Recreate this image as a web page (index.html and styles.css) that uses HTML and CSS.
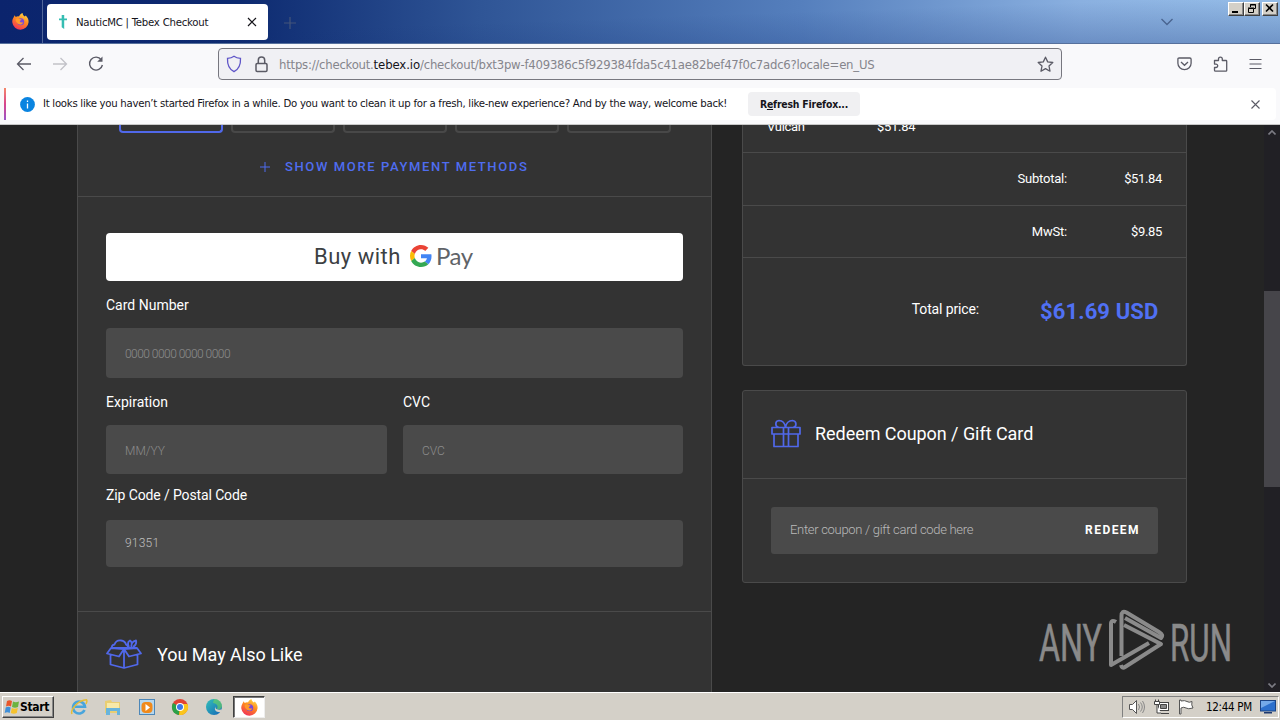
FILE: index.html
```html
<!DOCTYPE html>
<html lang="en">
<head>
<meta charset="utf-8">
<title>NauticMC | Tebex Checkout</title>
<link rel="stylesheet" href="styles.css">
</head>
<body>
<svg width="0" height="0" class="defs" aria-hidden="true">
  <defs>
    <linearGradient id="fire" x1=".8" y1="0" x2=".3" y2="1"><stop offset="0" stop-color="#ffe04a"/><stop offset=".45" stop-color="#ff8a1f"/><stop offset="1" stop-color="#f0305a"/></linearGradient>
    <linearGradient id="edge" x1="0" y1="0" x2="1" y2="1"><stop offset="0" stop-color="#35c1b8"/><stop offset="1" stop-color="#1264b8"/></linearGradient>
    <symbol id="firefox" viewBox="0 0 16 16">
      <path fill="url(#fire)" d="M1.200 4.600 2.500 2l1 1.700C4.600 3 5.800 3 6.600 3.200 7.300 1.600 8.500.6 10 0c-.1 1.500.8 2.300 2 3.200l1-.9c2 2 2.800 4.200 2.600 6.500A7.700 7.700 0 0 1 .3 9c-.2-1.600.1-3 .9-4.400z"/>
      <circle cx="8.200" cy="8.200" r="3.300" fill="#7a48d8"/>
      <path fill="#ff9a2a" d="M3.500 5.500c1.300-1 3-.7 4 .2l1.600.3c-.5 1-1.700.9-1.800 1.800.3 1.300 1.900 1.500 3.200.8-.4 2.200-3.200 3-5 1.500-1.500-1.200-2.300-2.800-2-4.600z"/>
    </symbol>
  </defs>
</svg>
<div class="screen">
  <header class="titlebar">
    <div class="view-btn"><svg width="17" height="17"><use href="#firefox"/></svg></div>
    <div class="tab">
      <svg width="8" height="14" viewBox="0 0 8 14" fill="#35bdb2"><path d="M2.700 0h2.500v3.500H8v1.800H5.200V14l-2.500-1.800V5.300H0V3.500h2.700z"/></svg>
      <span class="tab-title">NauticMC | Tebex Checkout</span>
      <svg width="10" height="10" viewBox="0 0 10 10" stroke="#15141a" stroke-width="1.200"><path d="M1 1l8 8M9 1L1 9"/></svg>
    </div>
    <svg class="newtab" width="12" height="12" viewBox="0 0 12 12" stroke="#44557a" stroke-width="1.200"><path d="M6 0v12M0 6h12"/></svg>
    <svg class="alltabs" width="14" height="8" viewBox="0 0 14 8" fill="none" stroke="#4a6590" stroke-width="1.400"><path d="M1.500 1L7 6.500 12.500 1"/></svg>
    <div class="winbtns">
      <span class="wb"><svg width="13" height="11"><path d="M3 8h6v2H3z"/></svg></span>
      <span class="wb"><svg width="13" height="11" fill="none" stroke="#000"><path d="M5.500 4V1.500h5v4H9M5 2h6M3.500 5.500h5v4h-5zM3 5h6"/></svg></span>
      <span class="wb last"><svg width="13" height="11" stroke="#000" stroke-width="1.600"><path d="M3 1.500l7 7M10 1.500l-7 7"/></svg></span>
    </div>
  </header>

  <div class="toolbar">
    <svg class="back" width="16" height="14" viewBox="0 0 16 14" fill="none" stroke="#5b5b66" stroke-width="1.300"><path d="M15 7H1.500M7.500 1l-6 6 6 6"/></svg>
    <svg class="fwd" width="16" height="14" viewBox="0 0 16 14" fill="none" stroke="#c2c2c8" stroke-width="1.300"><path d="M1 7h13.500M8.500 1l6 6-6 6"/></svg>
    <svg class="reload" width="16" height="16" viewBox="0 0 16 16" fill="none" stroke="#5b5b66" stroke-width="1.400"><path d="M13.300 3.800A6.500 6.500 0 1 0 14.400 9"/><path d="M14.500.5v5.300H9.200z" fill="#5b5b66" stroke="none"/></svg>
    <div class="urlbar">
      <svg width="16" height="18" viewBox="0 0 16 18" fill="none" stroke="#5f55c8" stroke-width="1.300"><path d="M8 1.200c2 1.500 4 2 6.500 2.200C14.800 9.500 13.300 14 8 16.700 2.700 14 1.200 9.500 1.500 3.400 4 3.200 6 2.700 8 1.200z"/></svg>
      <svg class="lock" width="13" height="17" viewBox="0 0 13 17" fill="none" stroke="#5b5b66" stroke-width="1.500"><rect x="1" y="7.500" width="11" height="8" rx="1.200"/><path d="M3.300 7.500V4.200a3.200 3.200 0 0 1 6.400 0V7.500"/></svg>
      <span class="url">https://checkout.<b>tebex.io</b>/checkout/bxt3pw-f409386c5f929384fda5c41ae82bef47f0c7adc6?locale=en_US</span>
      <svg class="star" width="17" height="17" viewBox="0 0 17 17" fill="none" stroke="#5b5b66" stroke-width="1.300" stroke-linejoin="round"><path d="M8.500 1.200l2.200 4.700 5.100.6-3.800 3.500 1 5.200-4.500-2.600L4 15.200 5 10 1.200 6.500l5.100-.6z"/></svg>
    </div>
    <div class="tools">
      <svg width="15" height="14" viewBox="0 0 15 14" fill="none" stroke="#5b5b66" stroke-width="1.300"><path d="M2.200 1h10.600q1.300 0 1.300 1.300v4A6.600 6.300 0 0 1 .9 6.300v-4Q.9 1 2.200 1z"/><path d="M4 5l3.500 3.300L11 5"/></svg>
      <svg width="15" height="16" viewBox="0 0 15 16" fill="none" stroke="#5b5b66" stroke-width="1.300" stroke-linejoin="round"><path d="M1.500 4.500h4V3a1.900 1.900 0 0 1 3.800 0v1.500H13q.7 0 .7.700v9.300q0 .7-.7.700H2.500q-1 0-1-1v-2.700H3a1.700 1.700 0 0 0 0-3.400H1.500z"/></svg>
      <svg width="13" height="12" viewBox="0 0 13 12" stroke="#5b5b66" stroke-width="1.200"><path d="M.5 1.500h12M.5 6h12M.5 10.500h12"/></svg>
    </div>
  </div>

  <div class="notice">
    <span class="stripe"></span>
    <svg class="info" width="15" height="15" viewBox="0 0 15 15"><circle cx="7.500" cy="7.500" r="7.400" fill="#0a84e0"/><path d="M7.500 6.500v5M7.500 3.500v1.500" stroke="#fff" stroke-width="1.300"/></svg>
    <span class="notice-text">It looks like you haven’t started Firefox in a while. Do you want to clean it up for a fresh, like-new experience? And by the way, welcome back!</span>
    <span class="refresh">R<u>e</u>fresh Firefox...</span>
    <svg class="notice-x" width="9" height="9" viewBox="0 0 9 9" stroke="#5b5b66" stroke-width="1.100"><path d="M.5.5l8 8M8.500.5l-8 8"/></svg>
  </div>

  <main class="page">
    <section class="left">
      <div class="methods"><i class="on"></i><i></i><i></i><i></i><i></i></div>
      <div class="more"><svg width="10" height="10" viewBox="0 0 10 10" stroke="#4f6df0" stroke-width="1"><path d="M5 0v10M0 5h10"/></svg><span>SHOW MORE PAYMENT METHODS</span></div>
      <div class="form">
        <div class="gpay">
          <span class="buy">Buy with</span>
          <svg width="22" height="22" viewBox="0 0 48 48"><path fill="#EA4335" d="M24 9.500c3.540 0 6.710 1.220 9.210 3.600l6.850-6.850C35.900 2.380 30.470 0 24 0 14.620 0 6.510 5.380 2.560 13.220l7.980 6.190C12.430 13.720 17.740 9.500 24 9.500z"/><path fill="#4285F4" d="M46.980 24.550c0-1.570-.15-3.090-.38-4.550H24v9.020h12.940c-.58 2.960-2.260 5.480-4.780 7.180l7.730 6c4.510-4.180 7.090-10.360 7.090-17.650z"/><path fill="#FBBC05" d="M10.530 28.590c-.48-1.450-.76-2.990-.76-4.590s.27-3.140.76-4.590l-7.980-6.190C.92 16.460 0 20.120 0 24c0 3.880.92 7.540 2.560 10.780l7.970-6.190z"/><path fill="#34A853" d="M24 48c6.480 0 11.930-2.130 15.890-5.810l-7.730-6c-2.150 1.450-4.920 2.300-8.160 2.300-6.260 0-11.570-4.220-13.470-9.910l-7.980 6.190C6.510 42.620 14.620 48 24 48z"/></svg>
          <span class="pay">Pay</span>
        </div>
        <label class="l1">Card Number</label>
        <div class="field f1"><span class="t-card">0000 0000 0000 0000</span></div>
        <div class="pair">
          <div><label>Expiration</label><div class="field f2"><span>MM/YY</span></div></div>
          <div><label>CVC</label><div class="field f2"><span>CVC</span></div></div>
        </div>
        <label class="l3">Zip Code / Postal Code</label>
        <div class="field f3"><span>91351</span></div>
      </div>
      <div class="also">
        <svg width="36" height="30" viewBox="0 0 36 30" fill="none" stroke="#5068ea" stroke-width="1.800" stroke-linejoin="round"><path d="M4.500 14.500v11L18 29l13.500-3.500v-11M18 10v19M5 9L1 14.500l12 3L18 10zM31 9l4 5.500-12 3L18 10zM5 9h26M6 9c-.5-2 .5-3.200 2.500-3.500C9.500 2.500 12 1.200 15 1.500c3 .3 4.500 2 5 4 1.500.3 2 1.500 2 3M23 8c-1.500-3-1-5.500 1-6.500 1.500 1 2 2.500 1.500 4M25.500 8C25 5 26.500 2 30 1.500c.8 3-.5 5-3 6.500"/></svg>
        <span>You May Also Like</span>
      </div>
    </section>

    <section class="right">
      <div class="summary">
        <div class="item"><span>Vulcan</span><span>$51.84</span></div>
        <div class="sum s1"><span>Subtotal:</span><b>$51.84</b></div>
        <div class="sum s2"><span>MwSt:</span><b>$9.85</b></div>
        <div class="total"><span>Total price:</span><strong>$61.69 USD</strong></div>
      </div>
      <div class="coupon">
        <div class="coupon-head">
          <svg width="30" height="29" viewBox="0 0 30 29" fill="none" stroke="#5068ea" stroke-width="1.700" stroke-linejoin="round"><path d="M1 8.500h28V15H1zM3 15v12.500h24V15M12.500 8.500v19M17.500 8.500v19M12.500 8.500H8C4 8 3.500 2 8 1.500c4 0 6 3.500 6.500 7 .5-3.500 3-7 7-7C26 2 26 8 22 8.500"/></svg>
          <span>Redeem Coupon / Gift Card</span>
        </div>
        <div class="coupon-body"><div class="coupon-in"><span>Enter coupon / gift card code here</span><b>REDEEM</b></div></div>
      </div>
    </section>

    <div class="scroll">
      <svg width="8" height="5" fill="none" stroke="#7c7c84" stroke-width="1.600"><path d="M.5 4.500L4 1l3.500 3.500"/></svg>
      <div class="thumb"></div>
      <svg width="8" height="5" fill="none" stroke="#7c7c84" stroke-width="1.600"><path d="M.5.5L4 4 7.500.5"/></svg>
    </div>

    <svg class="watermark" width="200" height="68" viewBox="0 -2 200 68" fill="#8a8a8a">
      <text x="1" y="50" textLength="63" lengthAdjust="spacingAndGlyphs">ANY</text>
      <text x="132" y="50" textLength="62" lengthAdjust="spacingAndGlyphs">RUN</text>
      <g fill="none" stroke="#8a8a8a" stroke-width="4" stroke-linejoin="round">
        <path d="M78 11q-5-3-5 2v41l38-22"/>
        <path d="M83.500 45V5q0-6 5-3.500L121 21q5 3 2 6l-36-20"/>
        <path d="M86 14l37 19-36 23q-3 2-4-2"/>
      </g>
    </svg>
  </main>

  <footer class="taskbar">
    <div class="start">
      <svg width="16" height="16" viewBox="0 0 16 16"><path fill="#e8562a" d="M3 2q2.500-1.500 5 0L7 7.500q-2.500-1.300-5 0z"/><path fill="#6db33f" d="M9 2.500q2.500 1.300 6 0l-1 5.500q-3 1.300-6 0z"/><path fill="#3f8fd8" d="M1.700 8.500q2.500-1.300 5 0l-1 5.500q-2.500-1.300-5 0z"/><path fill="#f6c22c" d="M7.800 9q2.500 1.300 6 0l-1 5q-3 1.300-6 0z"/></svg>
      <span>Start</span>
    </div>
    <div class="quick">
      <svg width="18" height="18" viewBox="0 0 18 18" fill="none"><path d="M14.500 12a6 6 0 1 1 .5-3.200H5" stroke="#49a5dc" stroke-width="2.600"/><path d="M2 16C0 12 8 2 16.500 1.800 17.500 3 17 4 16 6" stroke="#e6bd35" stroke-width="1.500"/></svg>
      <svg width="18" height="18" viewBox="0 0 18 18"><path fill="#e9ce72" d="M1 3l6-1 1 2h8v11H1z"/><path fill="#f7e9a8" d="M3 5h12v6H3z"/><path fill="#68b4dc" d="M2 10h14v7h-3v-4H6v4H2z"/></svg>
      <svg width="18" height="18" viewBox="0 0 18 18"><rect x="1.500" y="1.500" width="15" height="15" fill="#b6d7ee" stroke="#4d87b8"/><rect x="3.500" y="4" width="11" height="11" rx="4" fill="#f08a1c"/><path fill="#fff" d="M7.500 6l4.500 3.400-4.500 3.500z"/></svg>
      <svg width="18" height="18" viewBox="0 0 18 18"><circle cx="9" cy="9" r="8" fill="#e14334"/><path d="M9 9L2 5a8 8 0 0 0 6 12z" fill="#2aa148"/><path d="M9 9l-1 8A8 8 0 0 0 16.500 6H9z" fill="#fbc51c"/><circle cx="9" cy="9" r="4" fill="#fff"/><circle cx="9" cy="9" r="3" fill="#3c78e8"/></svg>
      <svg width="18" height="18" viewBox="0 0 18 18"><circle cx="9" cy="9" r="8" fill="url(#edge)"/><path fill="#72d85a" d="M9 1c5 0 8 3.500 8 7 0 3-3 4-5.500 3.200C14 9 12 5 8 5z" opacity=".6"/><path fill="#d4d0c8" d="M10.500 8.500c-1 3 3 3.500 6.500 3l-.5 2.500c-5 1-8-2-6-5.500z"/></svg>
    </div>
    <div class="active"><svg width="17" height="17"><use href="#firefox"/></svg></div>
    <div class="tray">
      <svg width="17" height="16" viewBox="0 0 17 16" fill="none" stroke="#555"><path d="M1.500 5.500h3l4-4v13l-4-4h-3z" fill="#fff"/><path d="M10.500 5q2 3 0 6M12.500 3.500q3.500 4.500 0 9M14.500 2q4 6 0 12" stroke="#888"/></svg>
      <svg width="17" height="16" viewBox="0 0 17 16" stroke="#444" fill="#fff"><rect x="5.500" y="3.500" width="10" height="8"/><path d="M7.500 5.500h6v4h-6z" fill="#888"/><path d="M8 14.500h8M1.500 2.500h5v3h-5zM2.500.5v2M5.500.5v2M4 6v8h4"/></svg>
      <svg width="17" height="16" viewBox="0 0 17 16" stroke="#555" fill="#fff"><path d="M1.500 1v14h1.500V9q3-1.500 5 0t7 0q-2-3-1-6.500-3 1.500-5 0T3 2V1z"/></svg>
      <span class="clock">12:44 PM</span>
      <svg width="17" height="14" viewBox="0 0 17 14"><rect x=".5" y=".5" width="15" height="10.500" fill="#2d70cc" stroke="#1c4484"/><path fill="#74a9e8" d="M1 1h14L1 8z"/><path fill="#1c3970" d="M4 12h8v1.500H4z"/></svg>
    </div>
  </footer>
</div>
</body>
</html>
```
FILE: styles.css
```css
* { box-sizing: border-box; }
body { margin: 0; font-family: Roboto, sans-serif; color: #fff; }
svg { display: block; flex: none; }
.defs { position: absolute; }
.screen { width: 1280px; height: 720px; display: flex; flex-direction: column; overflow: hidden; background: #f9f9fb; }

.titlebar { height: 44px; flex: none; display: flex; background: linear-gradient(to bottom right, rgba(255,255,255,0) 45%, rgba(20,50,120,.3) 100%), linear-gradient(90deg, #0b246d 0, #0d2a70 240px, #2f5596 480px, #557fbd 800px, #8ab0e0 1080px, #98c0ea 1280px); border-bottom: 1px solid #56709c; }
.view-btn { width: 43px; height: 43px; border-right: 1px solid #50669a; padding: 13px 0 0 12px; }
.tab { width: 221px; height: 36px; margin: 4px 0 0 4px; background: #fff; border-radius: 4px; display: flex; align-items: center; padding: 0 11px 0 12px; color: #15141a; }
.tab-title { font: 11.300px "DejaVu Sans Condensed", sans-serif; margin-left: 9px; flex: 1; white-space: nowrap; letter-spacing: -.24px; padding-top: 1px; }
.newtab { margin: 17px 0 0 16px; }
.alltabs { margin: 18px 0 0 auto; }
.winbtns { display: flex; margin: 2px 2px 0 54px; }
.wb { width: 16px; height: 14px; background: #d4d0c8; border: 1px solid; border-color: #fff #404040 #404040 #fff; box-shadow: inset -1px -1px #888; }
.wb.last { margin-left: 2px; }

.toolbar { height: 40px; flex: none; display: flex; align-items: center; padding-left: 16px; }
.fwd { margin-left: 20px; }
.reload { margin-left: 20px; }
.urlbar { width: 844px; height: 32px; margin-left: 114px; border: 1px solid #77777f; border-radius: 4px; background: #f0f0f4; display: flex; align-items: center; padding: 0 7px; }
.lock { margin-left: 13px; }
.url { flex: 1; margin-left: 11px; font: 13px "DejaVu Sans Condensed", sans-serif; color: #85858c; white-space: nowrap; letter-spacing: -.235px; }
.url b { font-weight: 400; color: #15141a; letter-spacing: -.1px; }
.tools { margin-left: 115px; display: flex; align-items: center; gap: 21px; }

.notice { height: 32px; flex: none; margin: 4px 4px 5px; background: #fff; display: flex; align-items: center; color: #15141a; font: 11.300px "DejaVu Sans Condensed", sans-serif; border-radius: 0 4px 4px 0; }
.stripe { width: 2px; height: 32px; background: linear-gradient(#f5886a, #d8448c, #9a55c8); }
.info { margin-left: 14px; }
.notice-text { width: 684px; margin-left: 8px; white-space: nowrap; letter-spacing: -.28px; padding-bottom: 1px; }
.refresh { width: 112px; height: 24px; margin-left: 21px; background: #f0f0f2; border-radius: 4px; text-align: center; font-weight: 700; font-size: 10.400px; line-height: 24px; letter-spacing: -.2px; }
.notice-x { margin-left: auto; margin-right: 16px; }

.page { height: 567px; flex: none; background: #242424; display: flex; position: relative; overflow: hidden; padding-left: 77px; box-shadow: 0 -1px #c8c8c8; }
.left { width: 635px; height: 567px; background: #333; border: solid #4a4a4a; border-width: 0 1px; }
.methods { height: 8px; padding-left: 41px; display: flex; gap: 8px; }
.methods i { width: 104px; height: 8px; border: 2px solid #484848; border-top: 0; border-radius: 0 0 4px 4px; }
.methods .on { border-color: #5068ea; }
.more { height: 64px; border-bottom: 1px solid #4a4a4a; display: flex; align-items: center; padding: 4px 0 0 182px; color: #4f6df0; font-weight: 500; font-size: 13px; letter-spacing: 1.620px; white-space: nowrap; }
.more svg { margin-right: 15px; }
.form { height: 415px; padding: 36px 28px 0; border-bottom: 1px solid #4a4a4a; font-size: 14px; }
.gpay { height: 48px; background: #fff; border-radius: 4px; display: flex; align-items: center; padding-left: 208px; color: #3c4043; white-space: nowrap; }
.buy { width: 96px; font-size: 22px; letter-spacing: .5px; padding-bottom: 2px; }
.gpay svg { margin-bottom: 3px; }
.pay { margin-left: 4px; font: 24px Lato, sans-serif; letter-spacing: -.5px; color: #5f6368; padding-bottom: 4px; }
label { display: block; height: 47px; line-height: 49px; }
.field { background: #4a4a4a; border-radius: 4px; padding: 2px 0 0 19px; display: flex; align-items: center; font-size: 12px; color: #8c8c8c; font-weight: 300; }
.t-card { letter-spacing: -.54px; }
.f1 { height: 50px; }
.pair { display: grid; grid-template-columns: 281px 280px; gap: 16px; }
.f2 { height: 49px; }
.l3 { height: 46px; line-height: 42px; letter-spacing: -.12px; }
.f3 { height: 47px; color: #c0c0c0; padding: 0 0 2px 19px; letter-spacing: .2px; }
.also { display: flex; align-items: center; height: 84px; padding-left: 28px; font-size: 18px; }
.also span { margin-left: 15px; white-space: nowrap; letter-spacing: -.02px; }

.right { width: 445px; margin-left: 30px; }
.summary { height: 241px; background: #333; border: 1px solid #4a4a4a; border-top: 0; border-radius: 0 0 3px 3px; font-size: 13px; white-space: nowrap; }
.item { height: 28px; border-bottom: 1px solid #4a4a4a; padding-left: 24px; line-height: 15px; display: flex; align-items: flex-start; }
.item span { width: 110px; margin-top: -6px; letter-spacing: -.3px; }
.sum { height: 53px; border-bottom: 1px solid #4a4a4a; display: flex; justify-content: flex-end; align-items: center; padding: 0 24px 1px 0; letter-spacing: -.2px; }
.sum.s2 { height: 52px; padding-bottom: 0; }
.sum b { font-weight: 400; width: 95px; text-align: right; letter-spacing: -.35px; }
.total { height: 103px; display: flex; align-items: center; justify-content: flex-end; padding-right: 28px; font-size: 14px; letter-spacing: -.14px; }
.total > span { padding-bottom: 2px; }
.total strong { width: 118px; margin-left: 61px; color: #5070f4; font-size: 22px; padding-top: 3px; letter-spacing: .1px; }
.coupon { margin-top: 24px; height: 193px; background: #333; border: 1px solid #4a4a4a; border-radius: 3px; }
.coupon-head { height: 88px; border-bottom: 1px solid #4a4a4a; display: flex; align-items: center; padding: 0 0 3px 28px; font-size: 18px; white-space: nowrap; }
.coupon-head span { margin-left: 14px; letter-spacing: -.05px; }
.coupon-body { padding: 28px; }
.coupon-in { height: 47px; border-radius: 3px; background: #4a4a4a; display: flex; align-items: center; justify-content: space-between; padding: 0 18px 2px 19px; font-size: 13px; color: #bababa; font-weight: 300; white-space: nowrap; letter-spacing: -.3px; }
.coupon-in b { color: #fff; font-weight: 700; font-size: 12px; letter-spacing: 1.450px; }
.scroll { width: 16px; margin-left: auto; background: #212025; display: flex; flex-direction: column; align-items: center; padding: 5px 0 4px; }
.thumb { width: 16px; height: 196px; margin: 156px 0 auto; background: #46454a; }
.watermark { position: absolute; left: 1038px; top: 484px; font: 400 51px Roboto, sans-serif; }
.watermark text { stroke: #8a8a8a; stroke-width: .6px; }

.taskbar { flex: 1; background: #d4d0c8; border-top: 1px solid #fff; display: flex; align-items: center; color: #000; padding: 2px 0 1px 2px; }
.start { width: 52px; height: 22px; border: 1px solid; border-color: #fff #404040 #404040 #fff; box-shadow: inset -1px -1px #888; display: flex; align-items: center; padding-left: 1px; font: 700 12px "DejaVu Sans Condensed", sans-serif; letter-spacing: -.35px; }
.quick { display: flex; gap: 15.800px; margin-left: 16px; }
.active { width: 32px; height: 22px; margin-left: 10px; background: #fff; border: 1px solid; border-color: #404040 #eee #eee #404040; box-shadow: inset 1px 1px #777; padding: 2px 0 0 7px; }
.tray { width: 157px; height: 22px; margin: 0 1px 0 auto; border: 1px solid; border-color: #808080 #fff #fff #808080; display: flex; align-items: center; gap: 8px; padding-left: 5px; }
.clock { width: 46px; margin: 0 0 0 3px; font: 11.500px "DejaVu Sans Condensed", sans-serif; letter-spacing: -.3px; white-space: nowrap; }
```
